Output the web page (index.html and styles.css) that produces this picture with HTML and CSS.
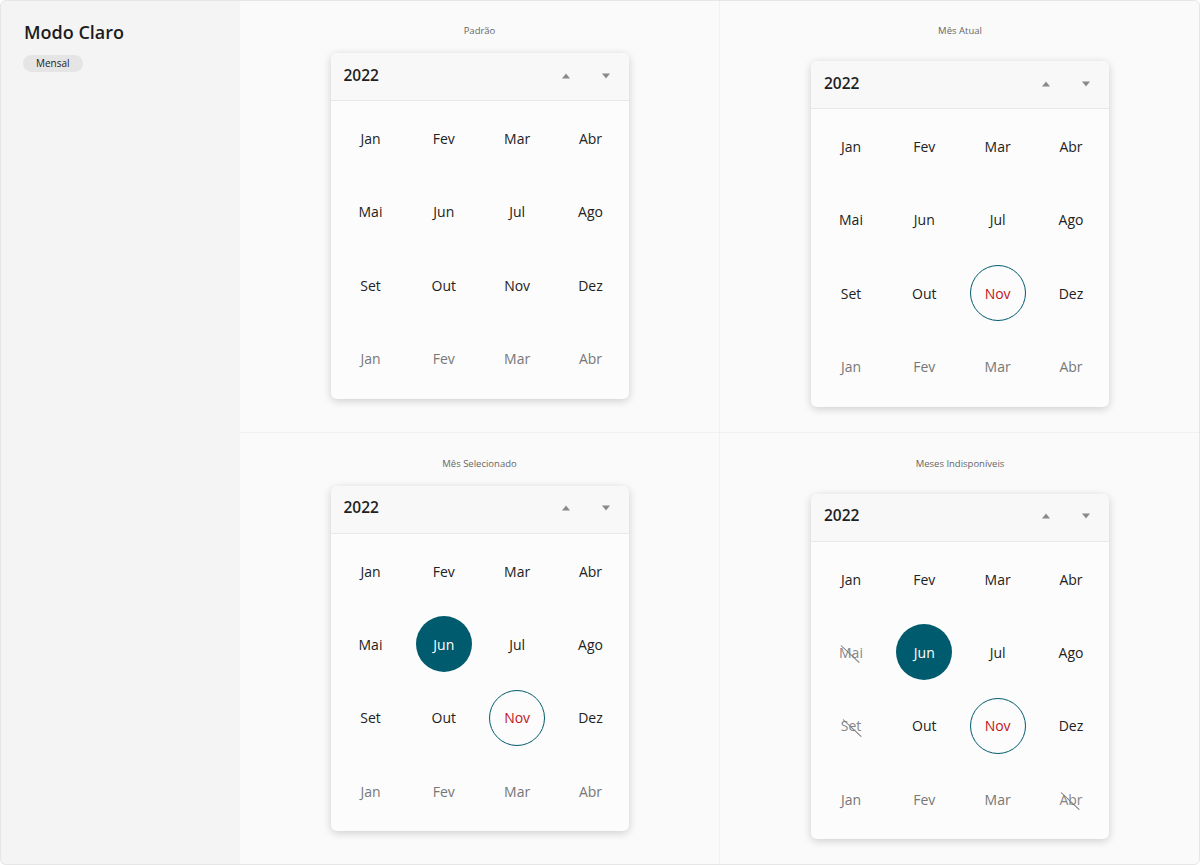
FILE: index.html
```html
<!DOCTYPE html>
<html lang="pt-BR">
<head>
  <meta charset="UTF-8">
  <title>Modo Claro - Mensal</title>
  <link rel="stylesheet" href="styles.css">
</head>
<body>
  <div class="frame">
    <aside class="sidebar">
      <h1>Modo Claro</h1>
      <span class="badge">Mensal</span>
    </aside>

    <main class="board">
      <!-- Padrão -->
      <section class="cell">
        <div class="label">Padrão</div>
        <div class="picker">
          <div class="picker-head">
            <span class="year">2022</span>
            <span class="arrows">
              <svg width="10" height="8" viewBox="0 0 10 8"><path d="M5 1.5 L9 6.5 H1 Z" fill="#8a8a8a"/></svg>
              <svg width="10" height="8" viewBox="0 0 10 8"><path d="M1 1.5 H9 L5 6.5 Z" fill="#8a8a8a"/></svg>
            </span>
          </div>
          <div class="months">
            <span class="m">Jan</span><span class="m">Fev</span><span class="m">Mar</span><span class="m">Abr</span>
            <span class="m">Mai</span><span class="m">Jun</span><span class="m">Jul</span><span class="m">Ago</span>
            <span class="m">Set</span><span class="m">Out</span><span class="m">Nov</span><span class="m">Dez</span>
            <span class="m next">Jan</span><span class="m next">Fev</span><span class="m next">Mar</span><span class="m next">Abr</span>
          </div>
        </div>
      </section>

      <!-- Mês Atual -->
      <section class="cell right">
        <div class="label">Mês Atual</div>
        <div class="picker">
          <div class="picker-head">
            <span class="year">2022</span>
            <span class="arrows">
              <svg width="10" height="8" viewBox="0 0 10 8"><path d="M5 1.5 L9 6.5 H1 Z" fill="#8a8a8a"/></svg>
              <svg width="10" height="8" viewBox="0 0 10 8"><path d="M1 1.5 H9 L5 6.5 Z" fill="#8a8a8a"/></svg>
            </span>
          </div>
          <div class="months">
            <span class="m">Jan</span><span class="m">Fev</span><span class="m">Mar</span><span class="m">Abr</span>
            <span class="m">Mai</span><span class="m">Jun</span><span class="m">Jul</span><span class="m">Ago</span>
            <span class="m">Set</span><span class="m">Out</span><span class="m"><i class="current">Nov</i></span><span class="m">Dez</span>
            <span class="m next">Jan</span><span class="m next">Fev</span><span class="m next">Mar</span><span class="m next">Abr</span>
          </div>
        </div>
      </section>

      <!-- Mês Selecionado -->
      <section class="cell bottom">
        <div class="label">Mês Selecionado</div>
        <div class="picker">
          <div class="picker-head">
            <span class="year">2022</span>
            <span class="arrows">
              <svg width="10" height="8" viewBox="0 0 10 8"><path d="M5 1.5 L9 6.5 H1 Z" fill="#8a8a8a"/></svg>
              <svg width="10" height="8" viewBox="0 0 10 8"><path d="M1 1.5 H9 L5 6.5 Z" fill="#8a8a8a"/></svg>
            </span>
          </div>
          <div class="months">
            <span class="m">Jan</span><span class="m">Fev</span><span class="m">Mar</span><span class="m">Abr</span>
            <span class="m">Mai</span><span class="m"><i class="selected">Jun</i></span><span class="m">Jul</span><span class="m">Ago</span>
            <span class="m">Set</span><span class="m">Out</span><span class="m"><i class="current">Nov</i></span><span class="m">Dez</span>
            <span class="m next">Jan</span><span class="m next">Fev</span><span class="m next">Mar</span><span class="m next">Abr</span>
          </div>
        </div>
      </section>

      <!-- Meses Indisponíveis -->
      <section class="cell right bottom">
        <div class="label">Meses Indisponíveis</div>
        <div class="picker">
          <div class="picker-head">
            <span class="year">2022</span>
            <span class="arrows">
              <svg width="10" height="8" viewBox="0 0 10 8"><path d="M5 1.5 L9 6.5 H1 Z" fill="#8a8a8a"/></svg>
              <svg width="10" height="8" viewBox="0 0 10 8"><path d="M1 1.5 H9 L5 6.5 Z" fill="#8a8a8a"/></svg>
            </span>
          </div>
          <div class="months">
            <span class="m">Jan</span><span class="m">Fev</span><span class="m">Mar</span><span class="m">Abr</span>
            <span class="m"><i class="off">Mai</i></span><span class="m"><i class="selected">Jun</i></span><span class="m">Jul</span><span class="m">Ago</span>
            <span class="m"><i class="off">Set</i></span><span class="m">Out</span><span class="m"><i class="current">Nov</i></span><span class="m">Dez</span>
            <span class="m next">Jan</span><span class="m next">Fev</span><span class="m next">Mar</span><span class="m next"><i class="off">Abr</i></span>
          </div>
        </div>
      </section>
    </main>
  </div>
</body>
</html>
```

FILE: styles.css
```css
body {
  margin: 0;
  font-family: "Open Sans", Arial, sans-serif;
  color: #222;
  background: #fff;
}

.frame {
  width: 1200px;
  height: 865px;
  border-radius: 6px;
  outline: 1px solid #e6e6e6;
  outline-offset: -1px;
  overflow: hidden;
  display: flex;
}

.sidebar {
  width: 240px;
  flex-shrink: 0;
  background-color: #f4f4f4;
  padding: 20px 23px;
  box-sizing: border-box;
}

.sidebar h1 {
  margin: 0 0 6px 1px;
  font-size: 18px;
  font-weight: 600;
  line-height: 24px;
  color: #1c1c1c;
}

.badge {
  display: inline-block;
  padding: 1px 13px;
  font-size: 10px;
  line-height: 15px;
  color: #222;
  background-color: #e5e5e5;
  border-radius: 10px;
}

.board {
  flex: 1;
  display: grid;
  grid-template-columns: 1fr 1fr;
  grid-template-rows: 1fr 1fr;
  background-color: #fafafa;
}

.cell {
  display: flex;
  flex-direction: column;
  align-items: center;
  padding-top: 24px;
  border-right: 1px solid #f1f1f1;
  border-bottom: 1px solid #f1f1f1;
}

.cell.right {
  border-right: none;
}

.cell.bottom {
  border-bottom: none;
}

.label {
  font-size: 9.5px;
  line-height: 14px;
  color: #666;
}

.picker {
  width: 298px;
  margin-top: 15px;
  background-color: #fcfcfc;
  border-radius: 6px;
  box-shadow: 0 2px 8px rgba(0, 0, 0, 0.18);
}

.cell.right .picker {
  margin-top: 23px;
}

.picker-head {
  height: 48px;
  box-sizing: border-box;
  display: flex;
  align-items: center;
  justify-content: space-between;
  padding: 0 18px 4px 13px;
  border-bottom: 1px solid #e8e8e8;
  background-color: #f8f8f8;
  border-radius: 6px 6px 0 0;
}

.year {
  font-size: 15.5px;
  font-weight: 600;
  color: #1f1f1f;
}

.arrows {
  display: flex;
  gap: 30px;
  padding-top: 2px;
}

.arrows svg {
  display: block;
}

.months {
  display: grid;
  grid-template-columns: repeat(4, 73.33px);
  grid-auto-rows: 73.33px;
  padding: 1px 1.33px 3.5px 3.33px;
}

.m {
  display: flex;
  align-items: center;
  justify-content: center;
  font-size: 14px;
  color: #222;
}

.m.next {
  color: #777;
}

.m i {
  font-style: normal;
  display: flex;
  align-items: center;
  justify-content: center;
}

.m .selected,
.m .current {
  width: 56px;
  height: 56px;
  box-sizing: border-box;
  border-radius: 50%;
}

.m .selected {
  background-color: #005b6e;
  color: #fff;
}

.m .current {
  border: 1px solid #005b6e;
  color: #c0161b;
}

.m .off {
  position: relative;
  color: #888;
}

.m .off::after {
  content: "";
  position: absolute;
  left: 2px;
  top: 50%;
  width: 25px;
  height: 1px;
  margin-top: -7px;
  background-color: #777;
  transform: rotate(43deg);
  transform-origin: left center;
}
```
